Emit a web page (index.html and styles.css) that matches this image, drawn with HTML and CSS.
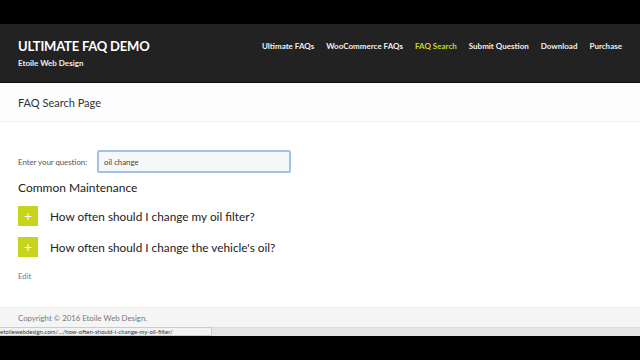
FILE: index.html
```html
<!DOCTYPE html>
<html>
<head>
<meta charset="utf-8">
<link rel="stylesheet" href="styles.css">
</head>
<body>
<div class="topbar"></div>
<header class="site-header">
  <div class="brand">
    <div class="site-title">ULTIMATE FAQ DEMO</div>
    <div class="site-tagline">Etoile Web Design</div>
  </div>
  <nav class="nav">
    <a>Ultimate FAQs</a>
    <a>WooCommerce FAQs</a>
    <a class="active">FAQ Search</a>
    <a>Submit Question</a>
    <a>Download</a>
    <a>Purchase</a>
  </nav>
</header>
<div class="page-title">FAQ Search Page</div>
<main class="content">
  <div class="search-row">
    <label class="search-label">Enter your question:</label>
    <div class="search-input">oil change</div>
  </div>
  <h2 class="cat">Common Maintenance</h2>
  <div class="faq">
    <span class="plus">+</span>
    <span class="q">How often should I change my oil filter?</span>
  </div>
  <div class="faq">
    <span class="plus">+</span>
    <span class="q">How often should I change the vehicle's oil?</span>
  </div>
  <div class="edit">Edit</div>
</main>
<footer class="footer">Copyright © 2016 Etoile Web Design.</footer>
<div class="statusrow">
  <div class="status">etoilewebdesign.com/.../how-often-should-i-change-my-oil-filter/</div>
  <div class="status-rest"></div>
</div>
<div class="bottombar"></div>
</body>
</html>
```
FILE: styles.css
```css
* { box-sizing: border-box; }
html, body { margin: 0; padding: 0; }
body {
  width: 640px;
  height: 360px;
  overflow: hidden;
  background: #fff;
  font-family: Lato, "Open Sans", sans-serif;
  color: #333;
}
.topbar { height: 24px; background: #000; }
.site-header {
  height: 59px;
  background: #222;
  display: flex;
  justify-content: space-between;
  padding: 14px 18px 0 18px;
  border-bottom: 1px solid #111;
}
.site-title {
  color: #fff;
  font-weight: 700;
  font-size: 13px;
  letter-spacing: -0.2px;
  line-height: 16px;
}
.site-tagline {
  color: #eee;
  font-weight: 700;
  font-size: 8px;
  margin-top: 4px;
}
.nav {
  display: flex;
  gap: 12px;
  padding-top: 2px;
}
.nav a {
  color: #f0f0f0;
  font-weight: 700;
  font-size: 8px;
  line-height: 12px;
}
.nav a.active { color: #c9d62f; }
.page-title {
  height: 39px;
  background: #fdfdfd;
  border-bottom: 1px solid #f0f0f0;
  padding: 13px 18px 0;
  font-size: 11px;
  color: #333;
}
.content { padding: 28px 18px 0; height: 185px; }
.search-row {
  display: flex;
  align-items: center;
}
.search-label {
  font-size: 7.8px;
  color: #555;
  width: 79px;
}
.search-input {
  width: 194px;
  height: 23px;
  border: 2px solid #9fc3e6;
  background: #f6f7f9;
  font-size: 7.8px;
  color: #444;
  padding: 5px 0 0 5px;
  border-radius: 2px;
}
.cat {
  font-weight: 400;
  font-size: 12px;
  color: #222;
  margin: 8px 0 11px;
  line-height: 14px;
}
.faq {
  display: flex;
  align-items: center;
  height: 20px;
  margin-bottom: 11px;
}
.plus {
  width: 20px;
  height: 20px;
  background: #c7d41c;
  color: #fff;
  font-size: 14px;
  font-weight: 400;
  line-height: 20px;
  display: flex;
  align-items: center;
  justify-content: center;
  margin-right: 12px;
}
.q { font-size: 11.8px; color: #222; }
.edit { font-size: 7.8px; color: #777; margin-top: 14px; }
.footer {
  height: 20px;
  background: #f5f5f5;
  border-top: 1px solid #eee;
  font-size: 7.8px;
  color: #777;
  padding: 5px 18px 0;
}
.statusrow { display: flex; height: 9px; }
.status {
  width: 212px;
  background: #f2f2f2;
  border: 1px solid #ccc;
  border-left: none;
  font-size: 6px;
  line-height: 7px;
  color: #333;
  white-space: nowrap;
  overflow: hidden;
}
.status-rest {
  flex: 1;
  background: #e4e4e4;
  border-top: 1px solid #ddd;
}
.bottombar { height: 29px; background: #000; }
```
